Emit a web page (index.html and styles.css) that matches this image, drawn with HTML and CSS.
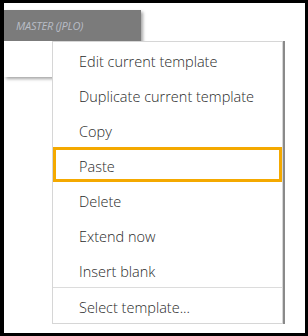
FILE: index.html
```html
<!DOCTYPE html>
<html>
<head>
<meta charset="utf-8">
<link rel="stylesheet" href="styles.css">
</head>
<body>
<div class="frame">
  <div class="card">
    <div class="card-head">MASTER (JPLO)</div>
    <div class="card-body"></div>
  </div>
  <ul class="menu">
    <li class="item">Edit current template</li>
    <li class="item">Duplicate current template</li>
    <li class="item">Copy</li>
    <li class="item active">Paste</li>
    <li class="item">Delete</li>
    <li class="item">Extend now</li>
    <li class="item">Insert blank</li>
    <li class="sep"></li>
    <li class="item">Select template...</li>
  </ul>
</div>
</body>
</html>
```
FILE: styles.css
```css
html, body {
  margin: 0;
  padding: 0;
  background: #000;
}
.frame {
  position: relative;
  box-sizing: border-box;
  width: 308px;
  height: 336px;
  border-style: solid;
  border-color: #000;
  border-width: 3px 3px 3px 4px;
  background: #fff;
  padding-top: 7px;
}
.card {
  width: 137px;
  box-shadow: 2px 2px 3px rgba(0,0,0,0.35);
  background: #fff;
}
.card-head {
  height: 31px;
  background: #7b7b7b;
  color: #b9bdc6;
  font-family: "Open Sans", "Noto Sans", sans-serif;
  font-style: italic;
  font-size: 11px;
  line-height: 31px;
  padding-left: 12px;
  letter-spacing: -0.2px;
}
.card-body {
  height: 36px;
}
.menu {
  position: absolute;
  left: 48px;
  top: 38px;
  width: 229px;
  margin: 0;
  padding: 0;
  list-style: none;
  background: #fff;
  border: 1px solid #d6d6d6;
  box-shadow: 2px 0 0 #8a8a8a;
  font-family: "Open Sans", "Noto Sans", sans-serif;
  font-weight: 300;
  font-size: 14.5px;
  color: #2a2a2a;
}
.item {
  box-sizing: border-box;
  height: 35px;
  line-height: 35px;
  padding-left: 26px;
  padding-top: 2px;
}
.item.active {
  border: 3px solid #f4a900;
  line-height: 29px;
  padding-left: 23px;
}
.sep {
  height: 1px;
  background: #dcdcdc;
}
```
